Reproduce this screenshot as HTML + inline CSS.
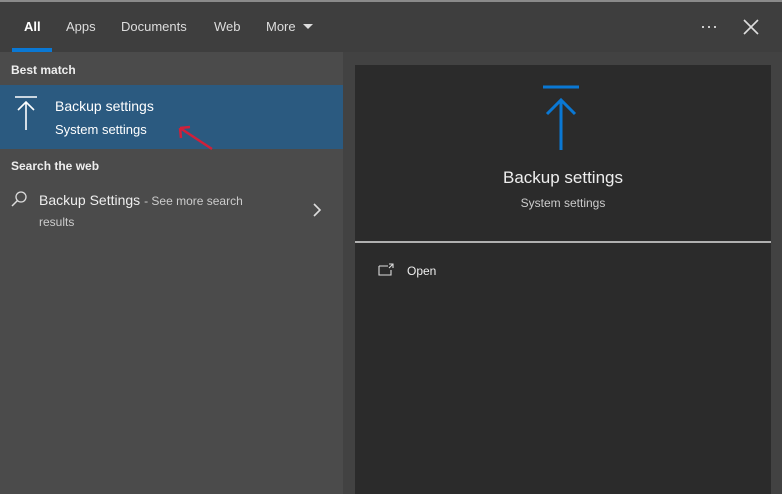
<!DOCTYPE html><html><head><style>
body{margin:0;width:782px;height:494px;background:#424242;font-family:"Liberation Sans",sans-serif;position:relative;overflow:hidden;color:#fff}
div,span{position:absolute}
.t{font-size:13px;color:#ddd}
</style></head><body>
<div style="left:0;top:0;width:782px;height:2px;background:#8a8a8a"></div>
<div style="left:0;top:2px;width:782px;height:50px;background:#3e3e3e"></div>
<span style="left:24px;top:19px;font-size:13px;font-weight:bold;color:#fff">All</span>
<div style="left:12px;top:48px;width:40px;height:4px;background:#0a78d4"></div>
<span class="t" style="left:66px;top:19px">Apps</span>
<span class="t" style="left:121px;top:19px">Documents</span>
<span class="t" style="left:214px;top:19px">Web</span>
<span class="t" style="left:266px;top:19px">More</span>
<div style="left:303px;top:24px;width:0;height:0;border-left:5px solid transparent;border-right:5px solid transparent;border-top:5px solid #ddd"></div>
<div style="left:702px;top:26px;width:2px;height:2px;background:#ccc"></div>
<div style="left:708px;top:26px;width:2px;height:2px;background:#ccc"></div>
<div style="left:714px;top:26px;width:2px;height:2px;background:#ccc"></div>
<svg style="position:absolute;left:743px;top:19px" width="16" height="16"><path d="M1 1L15 15M15 1L1 15" stroke="#ddd" stroke-width="1.6"/></svg>
<div style="left:0;top:52px;width:343px;height:442px;background:#4b4b4b"></div>
<span style="left:11px;top:63px;font-size:12px;font-weight:bold;color:#eee">Best match</span>
<div style="left:0;top:85px;width:343px;height:64px;background:#2b5a80"></div>
<svg style="position:absolute;left:14px;top:95px" width="24" height="36"><path d="M1 2H23M12 35V7M4 15L12 7L20 15" stroke="#fff" stroke-width="1.6" fill="none"/></svg>
<span style="left:55px;top:98px;font-size:14px;color:#fff">Backup settings</span>
<span style="left:55px;top:122px;font-size:13px;color:#fff">System settings</span>
<svg style="position:absolute;left:175px;top:122px" width="40" height="30"><path d="M37 27L5 6M5 6L6 16M5 6L15 5" stroke="#d0203a" stroke-width="2.5" fill="none"/></svg>
<span style="left:11px;top:159px;font-size:12px;font-weight:bold;color:#eee">Search the web</span>
<svg style="position:absolute;left:10px;top:190px" width="18" height="18"><circle cx="11" cy="7" r="5" stroke="#ddd" stroke-width="1.3" fill="none"/><path d="M7.5 10.5L2 16" stroke="#ddd" stroke-width="1.5"/></svg>
<span style="left:39px;top:192px;font-size:14px;color:#eee">Backup Settings <span style="position:static;font-size:12px;color:#ccc">- See more search</span></span>
<span style="left:39px;top:215px;font-size:12px;color:#ccc">results</span>
<svg style="position:absolute;left:312px;top:203px" width="10" height="14"><path d="M2 1L8 7L2 13" stroke="#ddd" stroke-width="1.6" fill="none"/></svg>
<div style="left:355px;top:65px;width:416px;height:429px;background:#2b2b2b"></div>
<svg style="position:absolute;left:540px;top:84px" width="42" height="66"><path d="M3 3H39M21 66V16M7 30L21 16L35 30" stroke="#0a78d4" stroke-width="3" fill="none"/></svg>
<span style="left:355px;width:416px;text-align:center;top:168px;font-size:17px;color:#eee">Backup settings</span>
<span style="left:355px;width:416px;text-align:center;top:196px;font-size:12px;color:#ccc">System settings</span>
<div style="left:355px;top:241px;width:416px;height:2px;background:#b0b0b0"></div>
<svg style="position:absolute;left:378px;top:263px" width="18" height="14"><path d="M1 3H10M1 3V12H13V7M11 1H15V5M15 1L11 5" stroke="#ddd" stroke-width="1.1" fill="none"/></svg>
<span style="left:407px;top:264px;font-size:12px;color:#eee">Open</span>
</body></html>
